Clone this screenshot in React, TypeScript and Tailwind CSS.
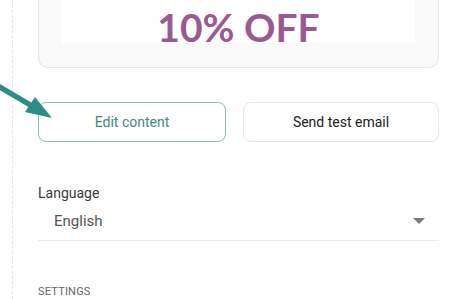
export default function App() {
  return (
    <div className="relative h-[299px] w-[463px] overflow-hidden bg-white" style={{ fontFamily: 'Roboto, "Noto Sans", sans-serif' }}>
      {/* dotted rail on the left */}
      <div className="absolute left-[12px] top-0 h-full border-l border-dashed border-[#e6e6e6]" />

      {/* pointer arrow */}
      <svg className="absolute left-0 top-[80px]" width="60" height="45" viewBox="0 0 60 45">
        <line x1="-2" y1="6" x2="32" y2="26" stroke="#2f8c84" strokeWidth="5.5" />
        <polygon points="35,17 25,32 52,38" fill="#2f8c84" />
      </svg>

      <div className="ml-[38px] w-[401px]">
        {/* preview card */}
        <div className="-mt-[12px] h-[80px] rounded-b-[10px] rounded-t-none border border-t-0 border-[#e6e6e6] bg-[#f9f9f9] px-[23px]">
          <div className="h-[55px] overflow-hidden bg-white pt-[13px] text-center">
            <span className="text-[39px] font-bold leading-[52px] text-[#995a92]" style={{ fontFamily: 'Lato, sans-serif' }}>
              10% OFF
            </span>
          </div>
        </div>

        {/* actions */}
        <div className="mt-[34px] flex gap-[17px]">
          <button className="h-[40px] w-[188px] rounded-[8px] border border-[#86bdb7] text-[14px] text-[#3a8b83]">
            Edit content
          </button>
          <button className="h-[40px] flex-1 rounded-[8px] border border-[#e6e6e6] text-[14px] text-[#222]">
            Send test email
          </button>
        </div>

        {/* language */}
        <div className="mt-[42px] text-[14px] leading-[18px] text-[#3a3a3a]">Language</div>
        <div className="flex h-[39px] items-center justify-between border-b border-[#e8e8e8] pl-[16px] pr-[14px]">
          <span className="text-[15px] text-[#555]">English</span>
          <svg width="12" height="6" viewBox="0 0 12 6">
            <polygon points="0,0 12,0 6,6" fill="#7a7a7a" />
          </svg>
        </div>

        <div className="mt-[44px] text-[11px] uppercase leading-[14px] tracking-[0.2px] text-[#666]">Settings</div>
      </div>
    </div>
  )
}
